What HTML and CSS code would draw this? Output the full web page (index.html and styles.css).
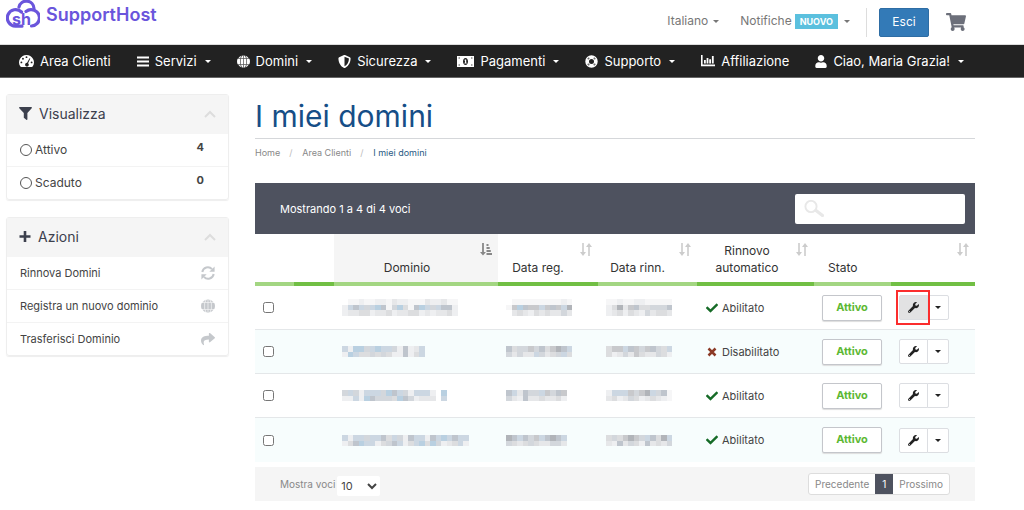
FILE: index.html
```html
<!DOCTYPE html>
<html lang="it">
<head>
<meta charset="utf-8">
<title>I miei domini - SupportHost</title>
<link rel="stylesheet" href="styles.css">
</head>
<body>
<svg class="sprite" aria-hidden="true">
  <symbol id="gauge" viewBox="0 0 16 14"><path fill-rule="evenodd" d="M8 0a8 8 0 0 0-6.800 12.200Q1.600 13 2.500 13h11q.9 0 1.300-.8A8 8 0 0 0 8 0ZM8 1.300a1 1 0 1 1 0 2 1 1 0 0 1 0-2ZM4.200 3a1 1 0 1 1 0 2 1 1 0 0 1 0-2ZM2.500 7a1 1 0 1 1 0 2 1 1 0 0 1 0-2Zm11 0a1 1 0 1 1 0 2 1 1 0 0 1 0-2ZM11.300 3.400l.8.4-2.400 5a2 2 0 1 1-1.100-.4Z"/></symbol>
  <symbol id="bars" viewBox="0 0 12 12"><path d="M0 1h12v2H0zM0 5h12v2H0zM0 9h12v2H0z"/></symbol>
  <symbol id="globe" viewBox="0 0 14 14"><circle cx="7" cy="7" r="6.800" opacity=".25"/><path d="M1.800 3.300A6.700 6.700 0 0 1 4.500.9L3.500 3.300ZM4.400 3.300Q5.200.6 6.600.2v3.100ZM7.400.2Q8.800.6 9.600 3.300H7.400ZM9.500.9a6.700 6.700 0 0 1 2.700 2.400h-1.700ZM.7 4.100h2.600v5.800H.7a7 7 0 0 1 0-5.800ZM4.100 4.100h2.500v5.800H4.100ZM7.400 4.100h2.500v5.800H7.400ZM10.700 4.100h2.600a7 7 0 0 1 0 5.800h-2.600ZM1.800 10.700h1.700l1 2.400a6.700 6.700 0 0 1-2.700-2.400ZM4.400 10.700h2.200v3.100Q5.200 13.400 4.400 10.700ZM7.400 10.700h2.200q-.8 2.700-2.200 3.100ZM10.500 10.700h1.700a6.700 6.700 0 0 1-2.700 2.400Z"/></symbol>
  <symbol id="shield" viewBox="0 0 512 512"><path d="M466.500 83.700l-192-80a48.150 48.150 0 0 0-36.900 0l-192 80C27.700 91.100 16 108.600 16 128c0 198.500 114.500 335.700 221.500 380.300 11.800 4.900 25.100 4.900 36.900 0C360.100 472.600 496 349.300 496 128c0-19.400-11.700-36.900-29.500-44.300zM256.100 446.300l-.1-381 175.900 73.300c-3.300 151.400-82.100 261.100-175.800 307.700z"/></symbol>
  <symbol id="money" viewBox="0 0 17 11"><path fill-rule="evenodd" d="M0 0h17v11H0ZM1.600 2.600h1.200V1.500H1.600ZM14.200 2.600h1.200V1.500h-1.200ZM1.600 9.500h1.200V8.400H1.600ZM14.200 9.500h1.200V8.400h-1.200ZM8.500 2C7 2 6 3.600 6 5.500S7 9 8.500 9 11 7.400 11 5.500 10 2 8.500 2Z"/><path d="M8 3.400h1.200v3.400h.5v.8H7.400v-.8H8V4.600h-.6v-.7Z"/></symbol>
  <symbol id="ring" viewBox="0 0 14 14"><circle cx="7" cy="7" r="4.700" fill="none" stroke="currentColor" stroke-width="4"/><path d="m2.300 4 1.700-1.700 1.200 1.200-1.700 1.700ZM10 2.300 11.700 4l-1.200 1.200-1.700-1.700ZM2.300 10l1.200-1.200 1.700 1.700L4 11.700ZM10.500 8.800l1.200 1.200-1.700 1.700-1.200-1.200Z" fill="#222" opacity=".65"/></symbol>
  <symbol id="chart" viewBox="0 0 14 12"><path d="M0 0h1.600v9.600H14v1.600H0ZM3 5h1.800v3.600H3ZM5.600 3h1.800v5.600H5.600ZM8.200 4.200H10v4.400H8.200ZM10.900 1h1.800v7.600h-1.800Z"/></symbol>
  <symbol id="user" viewBox="0 0 448 512"><path d="M224 256c70.700 0 128-57.300 128-128S294.700 0 224 0 96 57.300 96 128s57.300 128 128 128zm89.600 32h-16.700c-22.200 10.200-46.900 16-72.900 16s-50.600-5.800-72.900-16h-16.700C60.200 288 0 348.200 0 422.400V464c0 26.500 21.500 48 48 48h352c26.500 0 48-21.500 48-48v-41.600c0-74.200-60.200-134.400-134.400-134.400z"/></symbol>
  <symbol id="cart" viewBox="0 0 576 512"><path d="M528.120 301.319l47.273-208C578.806 78.301 567.391 64 551.990 64H159.208l-9.166-44.810C147.758 8.021 137.930 0 126.529 0H24C10.745 0 0 10.745 0 24v16c0 13.255 10.745 24 24 24h69.883l70.248 343.435C147.325 417.100 136 435.222 136 456c0 30.928 25.072 56 56 56s56-25.072 56-56c0-15.674-6.447-29.835-16.824-40h209.647C430.447 426.165 424 440.326 424 456c0 30.928 25.072 56 56 56s56-25.072 56-56c0-22.172-12.888-41.332-31.579-50.405l5.517-24.276c3.413-15.018-8.002-29.319-23.403-29.319H218.117l-6.545-32h293.145c11.206 0 20.920-7.754 23.403-18.681z"/></symbol>
  <symbol id="filter" viewBox="0 0 13 13"><path d="M.8 0h11.400q1.200.2.500 1.200L8.400 6v6.300q-.2 1-1.100.4L4.800 10.800V6L.3 1.200Q-.4.200.8 0Z"/></symbol>
  <symbol id="plus" viewBox="0 0 12 12"><path d="M4.700.5h2.600v4.200h4.200v2.600H7.300v4.200H4.700V7.300H.5V4.700h4.200Z"/></symbol>
  <symbol id="up" viewBox="0 0 12 8"><path d="m1 7 5-5 5 5" fill="none" stroke="currentColor" stroke-width="2"/></symbol>
  <symbol id="sync" viewBox="0 0 14 14"><path d="M1.300 6A5.600 5.600 0 0 1 11 3.200M12.700 8A5.600 5.600 0 0 1 3 10.800" fill="none" stroke="currentColor" stroke-width="2"/><path d="M13.600.5v5.300H8.300ZM.4 13.500V8.200h5.300Z"/></symbol>
  <symbol id="share" viewBox="0 0 512 512"><path d="M503.691 189.836L327.687 37.851C312.281 24.546 288 35.347 288 56.015v80.053C127.371 137.907 0 170.100 0 322.326c0 61.441 39.581 122.309 83.333 154.132 13.653 9.931 33.111-2.533 28.077-18.631C66.066 312.814 132.917 274.316 288 272.085V360c0 20.700 24.300 31.453 39.687 18.164l176.004-152c11.071-9.562 11.086-26.753 0-36.328z"/></symbol>
  <symbol id="check" viewBox="0 0 512 512"><path d="M173.898 439.404l-166.400-166.400c-9.997-9.997-9.997-26.206 0-36.204l36.203-36.204c9.997-9.998 26.207-9.998 36.204 0L192 312.690 432.095 72.596c9.997-9.997 26.207-9.997 36.204 0l36.203 36.204c9.997 9.997 9.997 26.206 0 36.204l-294.400 294.401c-9.998 9.997-26.207 9.997-36.204-.001z"/></symbol>
  <symbol id="cross" viewBox="0 0 12 12"><path d="m2.500 2.500 7 7m0-7-7 7" fill="none" stroke="currentColor" stroke-width="2.500"/></symbol>
  <symbol id="wrench" viewBox="0 0 512 512"><path d="M507.730 109.100c-2.240-9.030-13.540-12.090-20.120-5.510l-74.360 74.360-67.880-11.310-11.310-67.880 74.360-74.360c6.620-6.620 3.430-17.900-5.660-20.160-47.380-11.740-99.550.91-136.580 37.930-39.640 39.640-50.550 97.100-34.050 147.200L18.740 402.760c-24.990 24.990-24.990 65.510 0 90.500 24.990 24.990 65.510 24.990 90.500 0l213.210-213.210c50.120 16.710 107.470 5.680 147.370-34.220 37.070-37.070 49.700-89.320 37.910-136.730zM64 472c-13.250 0-24-10.750-24-24 0-13.260 10.750-24 24-24s24 10.740 24 24c0 13.250-10.750 24-24 24z"/></symbol>
  <symbol id="caret" viewBox="0 0 8 4"><path d="M0 0h8L4 4Z"/></symbol>
  <symbol id="sort" viewBox="0 0 12 13"><path d="M3 0v10M9 3v10" fill="none" stroke="currentColor" stroke-width="1.600"/><path d="M0 9h6L3 13ZM6 4h6L9 0Z"/></symbol>
  <symbol id="sorted" viewBox="0 0 12 13"><path d="M3 0v10" fill="none" stroke="currentColor" stroke-width="1.800"/><path d="M0 9h6L3 12.500ZM6.500 1h2v2h-2ZM6.500 4h3.200v2H6.500ZM6.500 7h4.300v2H6.500ZM6.500 10H12v2H6.500Z"/></symbol>
  <symbol id="lens" viewBox="0 0 20 17"><circle cx="7" cy="6.500" r="5.600" fill="none" stroke="currentColor" stroke-width="1.900"/><path d="m12 10.500 6.500 5" fill="none" stroke="currentColor" stroke-width="3.200" stroke-linecap="round"/></symbol>
</svg>

<header class="top">
  <a class="logo" href="#">
    <svg class="mark" viewBox="0 0 34 28" aria-hidden="true">
      <g fill="none" stroke="#6a55dc" stroke-width="3.200" stroke-linecap="round">
        <path d="M15.500 12A8.300 8.300 0 1 0 9.500 26.200H16"/>
        <path d="M13 7A7.600 7.600 0 0 1 28 8.500"/>
        <path d="M20 11.500Q22.500 9.500 25 9.600A8.200 8.200 0 0 1 25.500 26"/>
      </g>
      <text x="6" y="25" class="mark-text">sh</text>
    </svg>
    <span>SupportHost</span>
  </a>
  <div class="tools">
    <button class="plain">Italiano <svg class="caret"><use href="#caret"/></svg></button>
    <button class="plain notes">Notifiche <span class="badge">NUOVO</span> <svg class="caret"><use href="#caret"/></svg></button>
    <div class="exit"><button class="logout">Esci</button></div>
    <a class="cart" href="#" aria-label="Carrello"><svg><use href="#cart"/></svg></a>
  </div>
</header>

<nav class="nav">
  <a href="#"><svg class="w15"><use href="#gauge"/></svg>Area Clienti</a>
  <a href="#"><svg class="w12"><use href="#bars"/></svg>Servizi<svg class="caret"><use href="#caret"/></svg></a>
  <a href="#"><svg class="w13"><use href="#globe"/></svg>Domini<svg class="caret"><use href="#caret"/></svg></a>
  <a href="#"><svg class="w13"><use href="#shield"/></svg>Sicurezza<svg class="caret"><use href="#caret"/></svg></a>
  <a href="#"><svg class="w17"><use href="#money"/></svg>Pagamenti<svg class="caret"><use href="#caret"/></svg></a>
  <a href="#"><svg class="w13"><use href="#ring"/></svg>Supporto<svg class="caret"><use href="#caret"/></svg></a>
  <a href="#"><svg class="w14"><use href="#chart"/></svg>Affiliazione</a>
  <a href="#"><svg class="w12"><use href="#user"/></svg>Ciao, Maria Grazia!<svg class="caret"><use href="#caret"/></svg></a>
</nav>

<div class="page">
  <aside class="side">
    <section class="panel">
      <h2><svg class="w13"><use href="#filter"/></svg>Visualizza<svg class="up"><use href="#up"/></svg></h2>
      <a class="status" href="#"><i class="dot"></i>Attivo<b>4</b></a>
      <a class="status" href="#"><i class="dot"></i>Scaduto<b>0</b></a>
    </section>
    <section class="panel">
      <h2><svg class="w12"><use href="#plus"/></svg>Azioni<svg class="up"><use href="#up"/></svg></h2>
      <a href="#">Rinnova Domini<svg class="act"><use href="#sync"/></svg></a>
      <a href="#">Registra un nuovo dominio<svg class="act"><use href="#globe"/></svg></a>
      <a href="#">Trasferisci Dominio<svg class="act"><use href="#share"/></svg></a>
    </section>
  </aside>

  <main>
    <h1>I miei domini</h1>
    <div class="crumbs"><a href="#">Home</a><i>/</i><a href="#">Area Clienti</a><i>/</i><span>I miei domini</span></div>
    <div class="bar">
      <span>Mostrando 1 a 4 di 4 voci</span>
      <label class="search"><svg><use href="#lens"/></svg><input type="text" aria-label="Cerca"></label>
    </div>
    <table>
      <colgroup><col class="c1"><col class="c2"><col class="c3"><col class="c4"><col class="c5"><col class="c6"><col class="c7"><col class="c8"></colgroup>
      <thead>
        <tr>
          <th></th><th></th>
          <th class="on"><svg class="sort dark"><use href="#sorted"/></svg><div class="mid">Dominio</div></th>
          <th><svg class="sort"><use href="#sort"/></svg><div class="date">Data reg.</div></th>
          <th><svg class="sort"><use href="#sort"/></svg><div class="date">Data rinn.</div></th>
          <th><svg class="sort"><use href="#sort"/></svg><div class="auto">Rinnovo<br>automatico</div></th>
          <th><div class="state">Stato</div></th>
          <th><svg class="sort"><use href="#sort"/></svg></th>
        </tr>
      </thead>
      <tbody>
        <tr>
          <td><input type="checkbox" aria-label="Seleziona dominio 1"></td><td></td>
          <td><span class="mosaic" data-rows="0aabaabbacbbaaacbbcaa bfgfefhgaehdaghfefggb bccddbccdbccddbcbccdb"></span></td>
          <td><span class="mosaic" data-rows="0aaaaaaaaaba ajhgjjfjgjfk 0cdcbdcdccec"></span></td>
          <td><span class="mosaic" data-rows="aabaabbaaaaa bdkcjgddeeeg bcdbdcbecddc"></span></td>
          <td><span class="renew yes"><svg><use href="#check"/></svg>Abilitato</span></td>
          <td><span class="pill">Attivo</span></td>
          <td><div class="split hot"><button aria-label="Gestisci"><svg class="wrench"><use href="#wrench"/></svg></button><button aria-label="Altro"><svg class="caret"><use href="#caret"/></svg></button></div></td>
        </tr>
        <tr>
          <td><input type="checkbox" aria-label="Seleziona dominio 2"></td><td></td>
          <td><span class="mosaic" data-rows="fbhhefhffebgbcf bhfddededbbgbdf"></span></td>
          <td><span class="mosaic" data-rows="gdeejegdjkgf ececcfecdefd"></span></td>
          <td><span class="mosaic" data-rows="djjfgjejgedf dbcecjdccedb"></span></td>
          <td><span class="renew no"><svg><use href="#cross"/></svg>Disabilitato</span></td>
          <td><span class="pill">Attivo</span></td>
          <td><div class="split"><button aria-label="Gestisci"><svg class="wrench"><use href="#wrench"/></svg></button><button aria-label="Altro"><svg class="caret"><use href="#caret"/></svg></button></div></td>
        </tr>
        <tr>
          <td><input type="checkbox" aria-label="Seleziona dominio 3"></td><td></td>
          <td><span class="mosaic" data-rows="efebfffehgfebfffb0h bbfbhgeeedhgebccc0f"></span></td>
          <td><span class="mosaic" data-rows="gfcgeefjegj ecbgccdccdb"></span></td>
          <td><span class="mosaic" data-rows="bfffjejkfega cdbcedbcdcba"></span></td>
          <td><span class="renew yes"><svg><use href="#check"/></svg>Abilitato</span></td>
          <td><span class="pill">Attivo</span></td>
          <td><div class="split"><button aria-label="Gestisci"><svg class="wrench"><use href="#wrench"/></svg></button><button aria-label="Altro"><svg class="caret"><use href="#caret"/></svg></button></div></td>
        </tr>
        <tr>
          <td><input type="checkbox" aria-label="Seleziona dominio 4"></td><td></td>
          <td><span class="mosaic" data-rows="fbffeffgdfebgffbgfhfgff bdghffbdegfbdfhdhebcdfb"></span></td>
          <td><span class="mosaic" data-rows="kgfgejfgkgf edcdedcceec"></span></td>
          <td><span class="mosaic" data-rows="dedjkjefgdkf cbgcedbgcdce"></span></td>
          <td><span class="renew yes"><svg><use href="#check"/></svg>Abilitato</span></td>
          <td><span class="pill">Attivo</span></td>
          <td><div class="split"><button aria-label="Gestisci"><svg class="wrench"><use href="#wrench"/></svg></button><button aria-label="Altro"><svg class="caret"><use href="#caret"/></svg></button></div></td>
        </tr>
      </tbody>
    </table>
    <footer class="foot">
      <label>Mostra voci <select><option>10</option><option>25</option></select></label>
      <div class="pager"><a href="#">Precedente</a><a class="cur" href="#">1</a><a href="#">Prossimo</a></div>
    </footer>
  </main>
</div>
<script src="mosaic.js"></script>
</body>
</html>
```
FILE: styles.css
```css
* { box-sizing: border-box; }
body { margin: 0; font: 12px/18px Inter, "Liberation Sans", sans-serif; color: #444; background: #fff; }
a { color: inherit; text-decoration: none; }
button, input, select { font: inherit; color: inherit; }
svg { fill: currentColor; flex: none; }
.sprite { display: none; }
.caret { width: 6px; height: 3px; }

.top { display: flex; justify-content: space-between; height: 45px; padding: 0 58px 0 6px; border-bottom: 1px solid #ddd; }
.logo { display: flex; gap: 6px; height: 29px; font-size: 18px; font-weight: 600; line-height: 29px; color: #6a55dc; }
.mark { width: 34px; height: 28px; }
.mark-text { font-size: 16px; font-weight: 700; fill: #6a55dc; }
.tools { display: flex; align-items: center; color: #777; }
.plain { display: flex; align-items: center; gap: 5px; padding: 0 0 2px; border: 0; background: none; font-size: 12px; }
.notes { margin-left: 21px; gap: 3px; }
.notes .caret { margin-left: 3px; }
.badge { padding: 0 5px; background: #5bc0de; color: #fff; font-size: 9px; font-weight: 700; line-height: 15px; }
.exit { margin-left: 16px; padding-left: 12px; border-left: 1px solid #ddd; }
.logout { display: block; width: 50px; height: 29px; padding: 0; border: 1px solid #2e6da4; border-radius: 2px; background: #337ab7; color: #fff; font-size: 12px; }
.cart { margin-left: 17px; color: #6c6f7a; }
.cart svg { display: block; width: 20px; height: 18px; }

.nav { display: flex; gap: 26px; height: 33px; padding-left: 19px; border-bottom: 1px solid #666; background: #222; color: #fff; font-size: 13px; white-space: nowrap; }
.nav a { display: flex; align-items: center; gap: 6px; }
.nav .caret { margin-left: 2px; }
.w12 { width: 12px; height: 13px; }
.w13 { width: 13px; height: 13px; }
.w14 { width: 14px; height: 12px; }
.w15 { width: 15px; height: 13px; }
.w17 { width: 17px; height: 11px; }

.page { display: grid; grid-template-columns: 223px minmax(0, 1fr); gap: 26px; padding: 16px 49px 9px 6px; }
.side { display: flex; flex-direction: column; gap: 17px; }
.panel { border: 1px solid #eee; border-radius: 3px; box-shadow: 0 1px 1px #eee; }
.panel h2 { display: flex; align-items: center; gap: 7px; height: 39px; margin: 0; padding: 0 12px 2px; background: #f5f5f5; font-size: 14px; font-weight: 400; color: #3c404d; }
.panel .up { width: 12px; height: 8px; margin-left: auto; color: #ddd; }
.panel a { display: flex; align-items: center; height: 33px; padding: 0 13px; border-bottom: 1px solid #f3f3f3; font-size: 11px; }
.panel a:last-child { height: 32px; border-bottom: 0; }
.panel .status { font-size: 12px; }
.dot { width: 12px; height: 12px; margin-right: 3px; border: 1px solid #555; border-radius: 50%; }
.status b { margin: 0 11px 6px auto; font-size: 11px; }
.act { width: 14px; height: 14px; margin-left: auto; color: #c5c8cc; }

h1 { margin: 0; padding: 3px 0 2px; border-bottom: 1px solid #d5d7da; font-size: 30px; font-weight: 400; line-height: 39px; color: #164e87; }
.crumbs { display: flex; margin: 5px 0 21px; font-size: 9px; color: #888; }
.crumbs i { width: 22px; padding-left: 9px; font-style: normal; color: #bbb; }
.crumbs span { color: #285a84; }
.bar { display: flex; align-items: center; justify-content: space-between; height: 51px; padding: 0 10px 0 25px; background: #4e525f; color: #fff; font-size: 11px; }
.search { display: flex; align-items: center; width: 170px; height: 30px; padding-left: 9px; border-radius: 2px; background: #fff; color: #e8e8e8; }
.search svg { width: 20px; height: 17px; }
.search input { flex: 1; min-width: 0; border: 0; outline: 0; background: none; color: #444; }

table { width: 100%; border-collapse: separate; border-spacing: 0; table-layout: fixed; }
.c1 { width: 39px; } .c2 { width: 40px; } .c4 { width: 100px; } .c5 { width: 99px; }
.c6 { width: 117px; } .c7 { width: 77px; } .c8 { width: 84px; }
th { position: relative; height: 52px; padding: 7px 7px 6px; border-bottom: 4px solid #71bf44; vertical-align: bottom; font-weight: 400; line-height: 17px; color: #333; }
th:nth-child(odd) { border-bottom-color: #a3d682; }
.on { background: #f5f5f5; }
.sort { position: absolute; top: 9px; right: 6px; width: 12px; height: 13px; color: #ccc; }
.dark { color: #888; }
.mid { padding-right: 18px; }
.date { padding-right: 20px; }
.auto { padding-right: 17px; }
.state { padding-left: 7px; text-align: left; }
td { height: 44px; padding: 0 8px; border-bottom: 1px solid #e4e7e9; font-size: 11px; }
tbody tr:nth-child(even) { background: #f7fdfd; }
tbody tr:last-child td { border-bottom: 0; }
td input { display: block; width: 11px; height: 11px; margin: 0; }
.mosaic { display: block; }
.mosaic svg { display: block; }
.renew { display: flex; align-items: center; gap: 4px; padding-left: 1px; }
.renew svg { width: 12px; height: 12px; }
.yes svg { color: #166b27; }
.no svg { color: #8c3a26; }
.pill { display: block; width: 60px; height: 26px; border: 1px solid #c4c6cb; border-radius: 2px; background: #fff; color: #5cb833; font-weight: 700; line-height: 23px; text-align: center; box-shadow: 0 1px 1px #ddd; }
.split { display: flex; width: 50px; position: relative; }
.split button { display: grid; place-items: center; width: 22px; height: 25px; padding: 0; border: 1px solid #dcdee2; border-radius: 0 2px 2px 0; background: #fff; color: #222; }
.split button:first-child { width: 29px; margin-right: -1px; border-radius: 2px 0 0 2px; }
.wrench { width: 11px; height: 11px; }
.hot button:first-child { background: #e2e2e3; }
.hot::before { content: ""; position: absolute; z-index: 1; inset: -5px 19px -5px -3px; border: 2px solid #fb2d2d; }

.foot { display: flex; align-items: center; justify-content: space-between; height: 34px; margin-top: 5px; padding: 0 25px; background: #f5f5f5; color: #888; font-size: 10px; }
.foot label { display: flex; align-items: center; gap: 2px; }
.foot select { width: 43px; height: 20px; margin-top: 4px; padding: 0; border: 0; border-radius: 2px; background: #fff; color: #444; font-size: 11px; }
.pager { display: flex; border: 1px solid #ddd; border-radius: 3px; background: #fff; line-height: 20px; }
.pager a { padding: 0 6px; }
.pager .cur { width: 18px; padding: 0; background: #4e525f; color: #fff; text-align: center; }
```
FILE: mosaic.js
```javascript
// Draws the obscured values as small blocks, one letter per block.
const shades = {
  a: "#f6f6f7", b: "#eeeff1", c: "#e6e7e9", d: "#dcdddf", e: "#d3d7dc",
  f: "#ccd7e2", g: "#bfc5cd", h: "#b9d0e1", j: "#c8c9cc", k: "#b1b4b9"
};
document.querySelectorAll(".mosaic").forEach((box) => {
  const rows = box.dataset.rows.split(" ");
  const w = rows[0].length * 11;
  const h = rows.length * 11;
  let rects = "";
  rows.forEach((row, y) => [...row].forEach((key, x) => {
    if (shades[key]) rects += `<rect x="${x * 11}" y="${y * 11}" width="11" height="11" fill="${shades[key]}"/>`;
  }));
  box.innerHTML = `<svg width="${Math.round(w / 2)}" height="${Math.round(h / 2)}" viewBox="0 0 ${w} ${h}" shape-rendering="crispEdges">${rects}</svg>`;
});
```
